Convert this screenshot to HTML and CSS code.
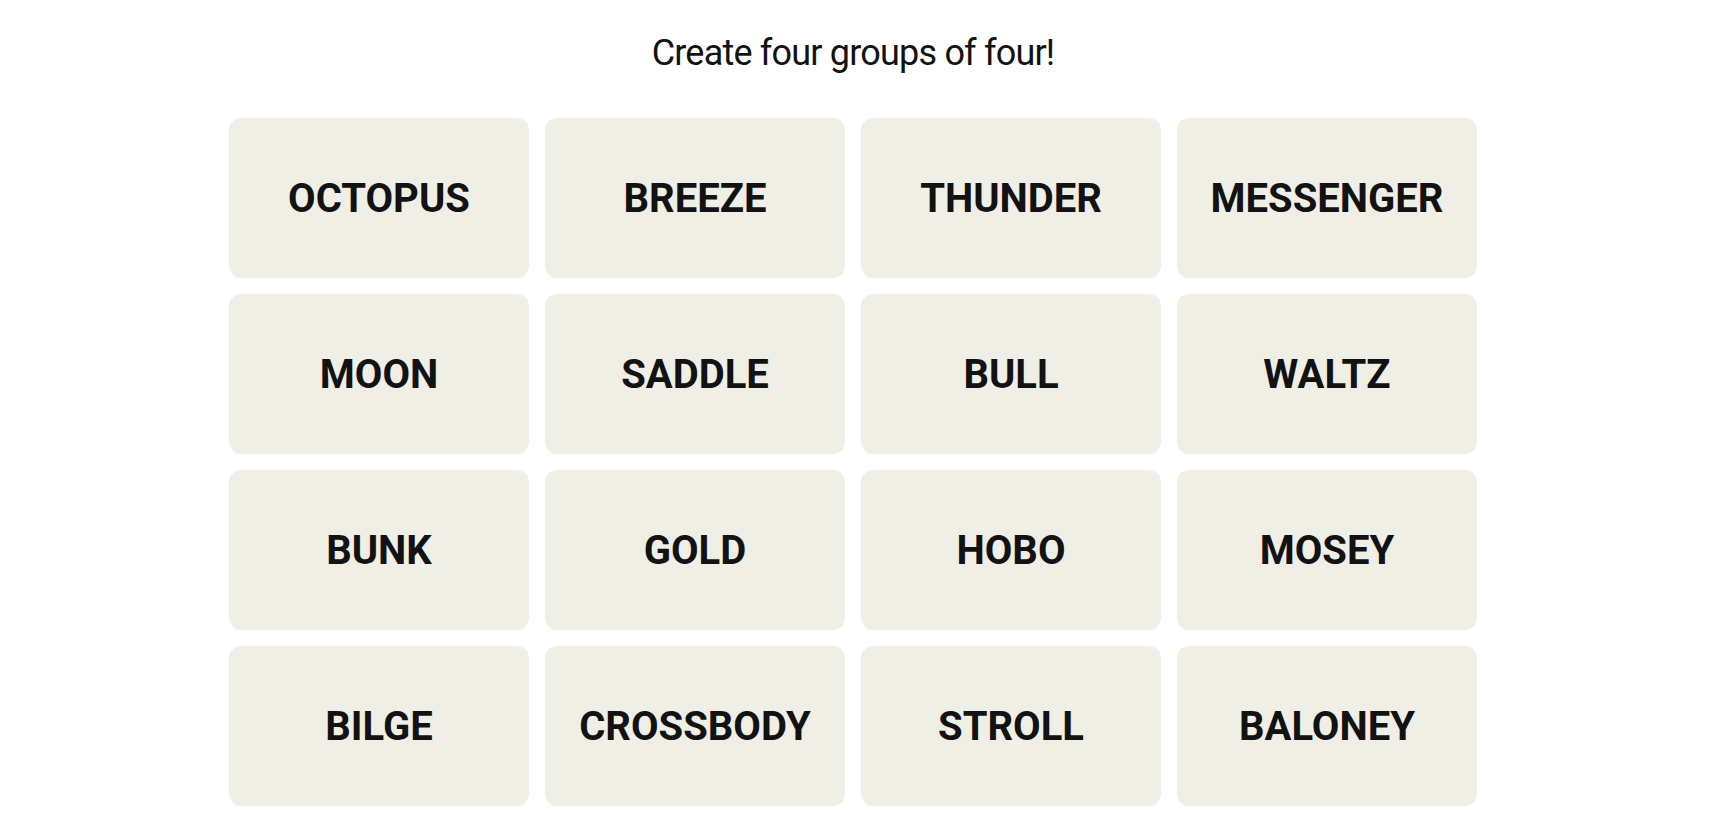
FILE: index.html
```html
<!DOCTYPE html>
<html lang="en">
<head>
    <meta charset="UTF-8">
    <title>Connections</title>
    <link rel="stylesheet" href="styles.css">
</head>
<body>
    <div class="game">
        <h2 class="game-title">Create four groups of four!</h2>
        <div class="board">
            <button class="card">OCTOPUS</button>
            <button class="card">BREEZE</button>
            <button class="card">THUNDER</button>
            <button class="card">MESSENGER</button>
            <button class="card">MOON</button>
            <button class="card">SADDLE</button>
            <button class="card">BULL</button>
            <button class="card">WALTZ</button>
            <button class="card">BUNK</button>
            <button class="card">GOLD</button>
            <button class="card">HOBO</button>
            <button class="card">MOSEY</button>
            <button class="card">BILGE</button>
            <button class="card">CROSSBODY</button>
            <button class="card">STROLL</button>
            <button class="card">BALONEY</button>
        </div>
    </div>
</body>
</html>
```

FILE: styles.css
```css
* {
    padding: 0;
    margin: 0;
    box-sizing: border-box;
}
body {
    background-color: #fff;
    color: #121212;
    font-family: Roboto, "Liberation Sans", sans-serif;
    padding-right: 20px;
}
.game {
    width: 1248px;
    margin: 0 auto;
    padding-top: 31px;
}
.game-title {
    font-size: 36px;
    font-weight: 400;
    line-height: 44px;
    letter-spacing: -0.8px;
    text-align: center;
}
.board {
    display: grid;
    grid-template-columns: repeat(4, 300px);
    grid-auto-rows: 160px;
    gap: 16px;
    margin-top: 43px;
}
.card {
    border: none;
    border-radius: 12px;
    background-color: #efefe6;
    color: #121212;
    font-family: Roboto, "Liberation Sans", sans-serif;
    font-size: 40px;
    font-weight: 700;
    cursor: pointer;
}
```
